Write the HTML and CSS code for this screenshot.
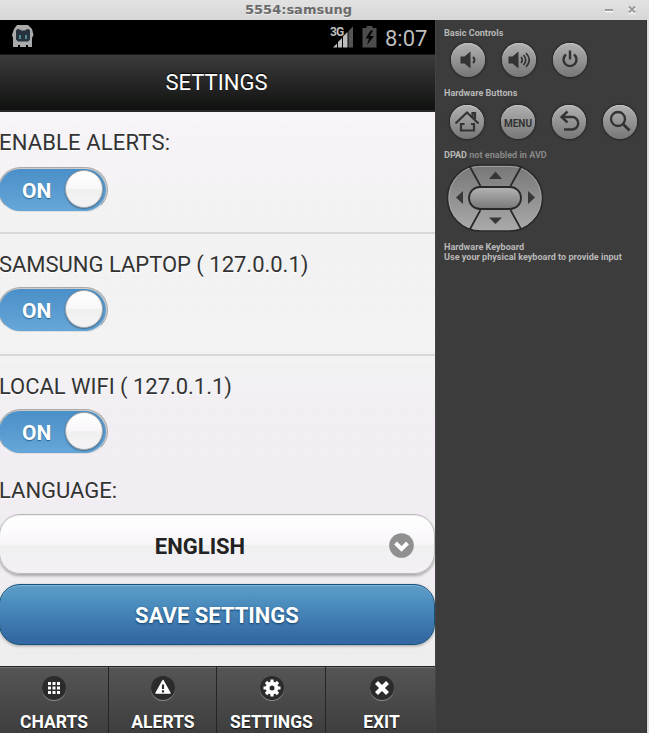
FILE: index.html
```html
<!DOCTYPE html>
<html lang="en">
<head>
<meta charset="utf-8">
<title>5554:samsung</title>
<link rel="stylesheet" href="styles.css">
</head>
<body>
<header class="titlebar">
  <span class="title">5554:samsung</span>
  <svg class="winbtns" width="36" height="14" viewBox="0 0 36 14"><path d="M2 8.5h8" stroke="#fff" stroke-width="1.5"/><path d="M2 7h8" stroke="#999" stroke-width="2"/><path d="M26 5l6 6M32 5l-6 6" stroke="#fff" stroke-width="2"/><path d="M26 3.500l6 6M32 3.500l-6 6" stroke="#999" stroke-width="2"/></svg>
</header>
<div class="window">
  <main class="phone">
    <div class="status">
      <svg class="robot" width="24" height="24" viewBox="0 0 24 24"><path d="M6 0h11l4 4 1.500 6-1.500 3v9h-4v-2h-2v2H9v-2H7v2H2v-9l-1-3 2-6z" fill="#aaa"/><path d="M5 5.500L6.500 4 9 4.500l1 1h4l1-1 2.500-.5L19 5.500v9l-2 2H7l-2-2z" fill="#26323c"/><path d="M8 10h2v4H8zM14 10h2v4h-2z" fill="#4b8796"/></svg>
      <div class="indicators">
        <svg width="48" height="24" viewBox="0 0 48 24"><path d="M2 22.500L6 18.500v4zM7 17l4-4v9.500H7zM12 11.500L16.500 7v15.500H12z" fill="#bdbdbd"/><path d="M17.500 6L22 1.500v21h-4.500z" fill="#555"/><path d="M31.500 3h4V1h6v2h4v19.500h-14z" fill="#4c4c4c"/><path d="M39.500 5.500l-5 8h3.500l-2 6.500 7-9h-4l3-5.500z" fill="#050505"/><text x="-1" y="10.500" class="net">3G</text></svg>
        <span class="clock">8:07</span>
      </div>
    </div>
    <h1 class="appbar">SETTINGS</h1>
    <div class="content">
      <section class="row">
        <div class="label l1">ENABLE ALERTS:</div>
        <div class="switch"><div class="fill"><span>ON</span></div><i class="knob"></i></div>
      </section>
      <section class="row second">
        <div class="label l2">SAMSUNG LAPTOP ( 127.0.0.1)</div>
        <div class="switch"><div class="fill"><span>ON</span></div><i class="knob"></i></div>
      </section>
      <section class="row last">
        <div class="label l3">LOCAL WIFI ( 127.0.1.1)</div>
        <div class="switch"><div class="fill"><span>ON</span></div><i class="knob"></i></div>
      </section>
      <div class="label language">LANGUAGE:</div>
      <div class="btn select"><span>ENGLISH</span>
        <svg width="25" height="25" viewBox="0 0 25 25"><circle cx="12.500" cy="12.500" r="12.300" fill="#909090"/><path d="M6.500 10l6 6 6-6" fill="none" stroke="#fff" stroke-width="4"/></svg>
      </div>
      <div class="btn save"><span>SAVE SETTINGS</span></div>
    </div>
    <nav class="tabs">
      <div class="tab"><svg width="26" height="28" viewBox="0 0 26 28"><circle class="rim" cx="13" cy="14" r="12"/><circle class="disc" cx="13" cy="13" r="12"/><path d="M7 7h3v3H7zM11.500 7h3v3h-3zM16 7h3v3h-3zM7 11.500h3v3H7zM11.500 11.500h3v3h-3zM16 11.500h3v3h-3zM7 16h3v3H7zM11.500 16h3v3h-3zM16 16h3v3h-3z" fill="#fff"/></svg><span>CHARTS</span></div>
      <div class="tab"><svg width="26" height="28" viewBox="0 0 26 28"><circle class="rim" cx="13" cy="14" r="12"/><circle class="disc" cx="13" cy="13" r="12"/><path d="M13 5.500L20 18H6z" fill="#fff" stroke="#fff" stroke-width="1.500" stroke-linejoin="round"/><path d="M13 9.500v4.500M13 15.200v2.200" stroke="#292929" stroke-width="2.200"/></svg><span>ALERTS</span></div>
      <div class="tab"><svg width="26" height="28" viewBox="0 0 26 28"><circle class="rim" cx="13" cy="14" r="12"/><circle class="disc" cx="13" cy="13" r="12"/><circle cx="13" cy="13" r="4.400" fill="none" stroke="#fff" stroke-width="4"/><path d="M13 4.500v17M4.500 13h17M7 7l12 12M19 7L7 19" stroke="#fff" stroke-width="3.200"/><circle cx="13" cy="13" r="2.500" fill="#292929"/></svg><span>SETTINGS</span></div>
      <div class="tab"><svg width="26" height="28" viewBox="0 0 26 28"><circle class="rim" cx="13" cy="14" r="12"/><circle class="disc" cx="13" cy="13" r="12"/><path d="M7.500 7.500l11 11M18.500 7.500l-11 11" stroke="#fff" stroke-width="4.200"/></svg><span>EXIT</span></div>
    </nav>
  </main>
  <aside class="panel">
    <h2 class="h basic">Basic Controls</h2>
    <div class="keys keys-top">
      <div class="key"><svg width="34" height="34" viewBox="0 0 34 34"><path d="M9.500 13.500h4l6-5v17l-6-5h-4z" fill="#333"/><path d="M22 14q3 3 0 6" fill="none" stroke="#333" stroke-width="2"/></svg></div>
      <div class="key"><svg width="34" height="34" viewBox="0 0 34 34"><path d="M6.500 13.500h4l6-5v17l-6-5h-4z" fill="#333"/><path d="M19 14q2.500 3 0 6M21.500 12q4.500 5 0 10M24 10q6.500 7 0 14" fill="none" stroke="#333" stroke-width="1.700"/></svg></div>
      <div class="key"><svg width="34" height="34" viewBox="0 0 34 34" fill="none" stroke="#333" stroke-width="2.400"><path d="M13 11.500a6.500 6.500 0 1 0 8 0M17 7.500v9"/></svg></div>
    </div>
    <h2 class="h hw">Hardware Buttons</h2>
    <div class="keys keys-bottom">
      <div class="key"><svg width="34" height="34" viewBox="0 0 34 34" fill="none" stroke="#333" stroke-width="2.200"><path d="M5.500 18.500L17 7.500 28.500 18.500M25 14V8h-2.500v4M14.500 19H11v6.500h13V19h-3"/></svg></div>
      <div class="key"><span class="menu">MENU</span></div>
      <div class="key"><svg width="34" height="34" viewBox="0 0 34 34" fill="none" stroke="#333" stroke-width="2.400"><path d="M15.500 6.500L9.500 12l6 5.500M10.500 12H20a6 6 0 0 1 0 12.500h-8"/></svg></div>
      <div class="key"><svg width="34" height="34" viewBox="0 0 34 34" fill="none" stroke="#333" stroke-width="2.300"><circle cx="15" cy="14" r="7"/><path d="M20 19l6.500 6.500" stroke-width="2.800"/></svg></div>
    </div>
    <h2 class="h dp">DPAD <span>not enabled in AVD</span></h2>
    <svg class="dpad" width="98" height="70" viewBox="0 0 98 70">
      <defs><linearGradient id="pad" x2="0" y2="1"><stop stop-color="#777"/><stop offset="1" stop-color="#aaa"/></linearGradient><linearGradient id="mid" x2="0" y2="1"><stop stop-color="#b5b5b5"/><stop offset="1" stop-color="#777"/></linearGradient></defs>
      <rect x="1.500" y="2" width="95" height="66" rx="33" fill="url(#pad)" stroke="#292929" stroke-width="1.600"/>
      <rect x="3" y="3.500" width="92" height="63" rx="31" fill="none" stroke="#aaa" stroke-width=".7"/>
      <path d="M23.500 3l11 20M75.500 3l-11 20M23.500 67l11-20M75.500 67l-11-20" stroke="#282828" stroke-width="1.700"/>
      <rect x="23" y="24" width="52" height="22" rx="11" fill="url(#mid)" stroke="#282828" stroke-width="1.800"/>
      <path d="M43 16l6.500-7.500L56 16zM43 54.500h13L49.500 61zM17 28v13l-7-6.500zM82 28v13l7-6.500z" fill="#373737"/>
    </svg>
    <h2 class="h kb">Hardware Keyboard</h2>
    <p class="h info">Use your physical keyboard to provide input</p>
  </aside>
</div>
</body>
</html>
```
FILE: styles.css
```css
* { box-sizing: border-box; }
body { margin: 0; width: 649px; height: 733px; overflow: hidden; font-family: Roboto, sans-serif; background: #ddd; }
.titlebar { height: 20px; display: flex; align-items: center; padding-left: 245px; background: linear-gradient(#e2e2e2, #d6d6d6); }
.title { font: bold 13px/18px "DejaVu Sans", sans-serif; color: #6a6a6a; width: 108px; white-space: nowrap; text-shadow: 0 1px #eee; }
.winbtns { margin-left: 250px; flex: none; }
.window { display: flex; height: 713px; }
.phone { width: 435px; flex: none; overflow: hidden; display: flex; flex-direction: column; }
.status { height: 34px; background: #000; display: flex; justify-content: space-between; padding: 5px 9px 0 11px; }
.indicators { display: flex; gap: 5px; }
.clock { font-size: 22px; line-height: 27px; color: #bdbdbd; width: 41px; white-space: nowrap; }
.net { font: bold 12px Roboto, sans-serif; fill: #bdbdbd; letter-spacing: -1px; }
.indicators svg { margin-right: 1px; overflow: visible; }
.appbar { margin: 0; height: 58px; border-top: 1px solid #191919; border-bottom: 2px solid #292929; background: linear-gradient(#3b3b3b, #101210); color: #fff; text-align: center; font-size: 22px; font-weight: 400; line-height: 55px; padding-right: 2px; text-shadow: 0 -1px 1px #000; }
.content { height: 554px; background: repeating-linear-gradient(90deg, rgba(0,0,0,.008) 0 1px, transparent 1px 15px), repeating-linear-gradient(rgba(0,0,0,.008) 0 1px, transparent 1px 15px), linear-gradient(#f8f4f8 0, #f2f2f2 22%, #f3f3f3 44%, #f2eef3 56%, #f1edf2 84%, #eeeeee); }
.row { height: 122px; border-bottom: 2px solid #d8d8d8; padding-top: 18px; }
.row.last { border: 0; height: 120px; }
.label { height: 26px; line-height: 26px; font-size: 22px; color: #333; white-space: nowrap; margin-left: -1px; text-shadow: 0 1px #fff; }
.l1 { letter-spacing: .15px; }
.l2 { letter-spacing: -.02px; }
.l3 { letter-spacing: -.03px; }
.switch { margin: 11px 0 0 -2px; width: 110px; height: 45px; border-radius: 23px; border: 1px solid #aaa; border-bottom-color: #ddd; background: #ccc; position: relative; }
.second .switch { margin-top: 9px; }
.last .switch { margin-top: 9px; }
.fill { height: 42px; margin: 1px 1px 0 0; border-radius: 21px; background: linear-gradient(#4a8fc8, #67a7d8); color: #fff; font-weight: 700; font-size: 21px; line-height: 45px; padding-left: 23px; text-shadow: 0 1px 1px #285f87; }
.knob { position: absolute; right: 4px; top: 2px; width: 38px; height: 38px; border-radius: 50%; border: 1px solid #aaa; background: linear-gradient(#fff, #f9f6fa 50%, #f0f0f0 51%, #f5f2f6); box-shadow: 0 1px 2px rgba(0,0,0,.4); }
.language { padding-top: 1px; margin-top: 1px; }
.btn { width: 436px; margin-left: -1px; border-radius: 21px; display: flex; align-items: center; justify-content: center; font-size: 22px; font-weight: 700; }
.select { height: 60px; margin-top: 11px; border: 1px solid #bbb; color: #222; background: linear-gradient(#fff, #f9f6fa 50%, #f0f0f0 52%, #f4f0f5); box-shadow: 0 2px 3px rgba(0,0,0,.3), inset 0 1px #eee; position: relative; padding: 5px 34px 0 0; }
.select svg { position: absolute; right: 20px; top: 18px; }
.save { height: 61px; margin-top: 10px; border: 1px solid #145078; color: #fff; background: linear-gradient(#5f9cc7, #4e91c1 25%, #3569a3 90%); box-shadow: inset 0 1px #7db5d9, 0 1px 3px rgba(0,0,0,.35); text-shadow: 0 1px 2px #123f64; padding-top: 2px; }
.tabs { height: 67px; display: grid; grid-template-columns: 108px 108px 109px 110px; }
.tab { border-top: 1px solid #222; border-left: 1px solid #252525; box-shadow: inset 0 1px #737373; background: linear-gradient(#555, #3e3e3e); display: flex; flex-direction: column; align-items: center; padding: 8px 0 0 1px; color: #fff; font-weight: 700; font-size: 17.500px; text-shadow: 0 1px 1px #111; }
.tab:first-child { border-left: 0; padding-left: 0; }
.tab:last-child { padding-left: 2px; }
.tab svg { flex: none; }
.tab span { line-height: 22px; margin-top: 8px; white-space: nowrap; }
.rim { fill: #8b8b8b; }
.disc { fill: #2b2b2b; }
.panel { width: 212px; margin-right: 2px; background: #3c3c3c; border-left: 1px solid #444; border-right: 1px solid #333; padding-left: 8px; }
.h { margin: 0; color: #b8b8b8; font-weight: 700; font-size: 9.080px; line-height: 11px; height: 11px; white-space: nowrap; }
.basic { margin-top: 8px; }
.keys { display: flex; gap: 17px; }
.keys-top { margin: 4px 0 0 7px; }
.hw { margin-top: 11px; }
.keys-bottom { margin: 6px 0 0 6px; }
.key { width: 34px; height: 34px; flex: none; border-radius: 50%; background: linear-gradient(#b0b0b0, #777); box-shadow: 0 0 2px 1px #272727, inset 0 1px #c4c4c4; display: flex; align-items: center; justify-content: center; }
.menu { color: #333; font-weight: 700; font-size: 10px; padding-top: 2px; }
.dp { margin-top: 11px; }
.dp span { color: #888; }
.dpad { display: block; margin: 2px 0 0 2px; }
.kb { margin-top: 9px; }
.info { height: 11px; line-height: 9px; }
```
